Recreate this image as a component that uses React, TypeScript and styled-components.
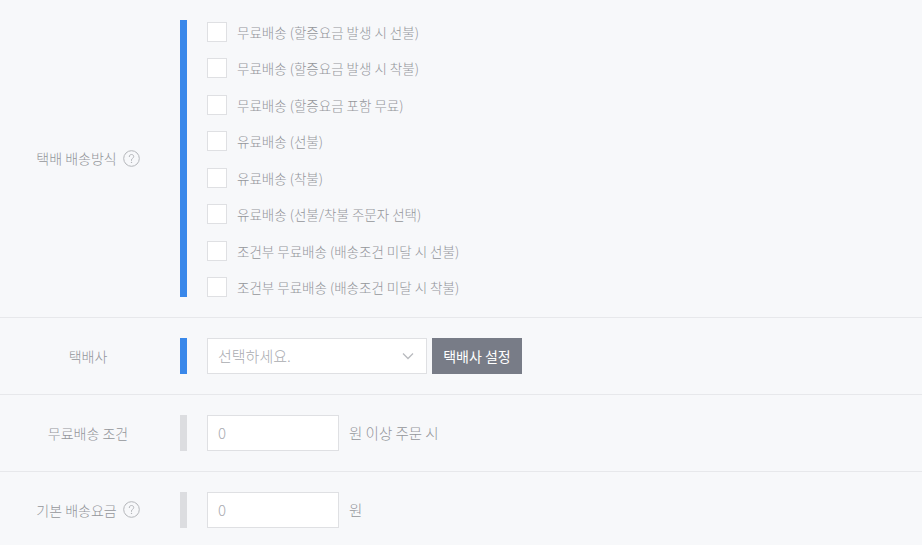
import React from 'react'
import styled, { createGlobalStyle } from 'styled-components'

const GlobalStyle = createGlobalStyle`
  html, body {
    margin: 0;
    padding: 0;
    background: #f7f8fa;
    font-family: 'Noto Sans CJK KR', 'Noto Sans', sans-serif;
  }
`

const shippingTypes = [
  '무료배송 (할증요금 발생 시 선불)',
  '무료배송 (할증요금 발생 시 착불)',
  '무료배송 (할증요금 포함 무료)',
  '유료배송 (선불)',
  '유료배송 (착불)',
  '유료배송 (선불/착불 주문자 선택)',
  '조건부 무료배송 (배송조건 미달 시 선불)',
  '조건부 무료배송 (배송조건 미달 시 착불)',
]

const HelpIcon = () => (
  <HelpMark>
    <svg width="17" height="17" viewBox="0 0 17 17" fill="none">
      <circle cx="8.5" cy="8.5" r="7.8" stroke="#b4b6ba" strokeWidth="1" />
      <path
        d="M6.3 6.6c0-1.3.9-2.1 2.2-2.1s2.2.8 2.2 2c0 .9-.5 1.4-1.2 1.9-.6.4-1 .8-1 1.6v.4"
        stroke="#b4b6ba"
        strokeWidth="1"
        strokeLinecap="round"
      />
      <circle cx="8.5" cy="12.4" r="0.7" fill="#b4b6ba" />
    </svg>
  </HelpMark>
)

const Chevron = () => (
  <svg width="12" height="8" viewBox="0 0 12 8" fill="none">
    <path d="M1 1.5l5 5 5-5" stroke="#b9bbbf" strokeWidth="1.3" />
  </svg>
)

const App = () => (
  <>
    <GlobalStyle />
    <Form>
      <Row>
        <Label>
          택배 배송방식 <HelpIcon />
        </Label>
        <Field>
          <Bar $active />
          <CheckList>
            {shippingTypes.map((t) => (
              <CheckItem key={t}>
                <CheckBox />
                <CheckText>{t}</CheckText>
              </CheckItem>
            ))}
          </CheckList>
        </Field>
      </Row>

      <Row>
        <Label>택배사</Label>
        <Field>
          <Bar $active />
          <Inline>
            <Select>
              <Placeholder>선택하세요.</Placeholder>
              <Chevron />
            </Select>
            <DarkButton>택배사 설정</DarkButton>
          </Inline>
        </Field>
      </Row>

      <Row>
        <Label>무료배송 조건</Label>
        <Field>
          <Bar />
          <Inline $gap={10}>
            <NumberBox>0</NumberBox>
            <Suffix>원 이상 주문 시</Suffix>
          </Inline>
        </Field>
      </Row>

      <Row>
        <Label>
          기본 배송요금 <HelpIcon />
        </Label>
        <Field>
          <Bar />
          <Inline $gap={10}>
            <NumberBox>0</NumberBox>
            <Suffix>원</Suffix>
          </Inline>
        </Field>
      </Row>
    </Form>
  </>
)

const Form = styled.div`
  width: 922px;
  background: #f7f8fa;
`

const Row = styled.div`
  display: flex;
  align-items: center;
  padding: 20px 0;
  border-top: 1px solid #e7e8eb;

  &:first-child {
    border-top: none;
  }
`

const Label = styled.div`
  width: 176px;
  flex-shrink: 0;
  display: flex;
  justify-content: center;
  align-items: center;
  gap: 6px;
  font-size: 14px;
  font-weight: 300;
  color: #94969b;
  margin-right: 4px;
`

const HelpMark = styled.span`
  display: inline-flex;
  width: 17px;
  height: 17px;
`

const Field = styled.div`
  display: flex;
  align-items: stretch;
  gap: 20px;
`

const Bar = styled.div<{ $active?: boolean }>`
  width: 7px;
  flex-shrink: 0;
  background: ${({ $active }) => ($active ? '#3a88ea' : '#dcdde0')};
`

const CheckList = styled.div`
  display: flex;
  flex-direction: column;
  gap: 16.43px;
  padding-top: 2px;
`

const CheckItem = styled.label`
  display: flex;
  align-items: center;
  gap: 10px;
  height: 20px;
`

const CheckBox = styled.span`
  width: 20px;
  height: 20px;
  box-sizing: border-box;
  background: #fff;
  border: 1px solid #dfe0e3;
`

const CheckText = styled.span`
  font-size: 13.5px;
  font-weight: 300;
  color: #94969b;
`

const Inline = styled.div<{ $gap?: number }>`
  display: flex;
  align-items: center;
  gap: ${({ $gap }) => $gap ?? 5}px;
`

const Select = styled.div`
  width: 220px;
  height: 36px;
  box-sizing: border-box;
  background: #fff;
  border: 1px solid #dfe0e3;
  display: flex;
  align-items: center;
  justify-content: space-between;
  padding: 0 12px 0 10px;
`

const Placeholder = styled.span`
  font-size: 15px;
  font-weight: 300;
  color: #a9abb0;
`

const DarkButton = styled.button`
  height: 36px;
  width: 90px;
  border: none;
  background: #787c87;
  color: #fff;
  font-family: inherit;
  font-size: 14px;
  padding: 0;
`

const NumberBox = styled.div`
  width: 132px;
  height: 36px;
  box-sizing: border-box;
  background: #fff;
  border: 1px solid #dfe0e3;
  display: flex;
  align-items: center;
  padding-left: 10px;
  font-size: 15px;
  font-weight: 300;
  color: #a9abb0;
`

const Suffix = styled.span`
  font-size: 14.5px;
  font-weight: 300;
  color: #94969b;
`

export default App
